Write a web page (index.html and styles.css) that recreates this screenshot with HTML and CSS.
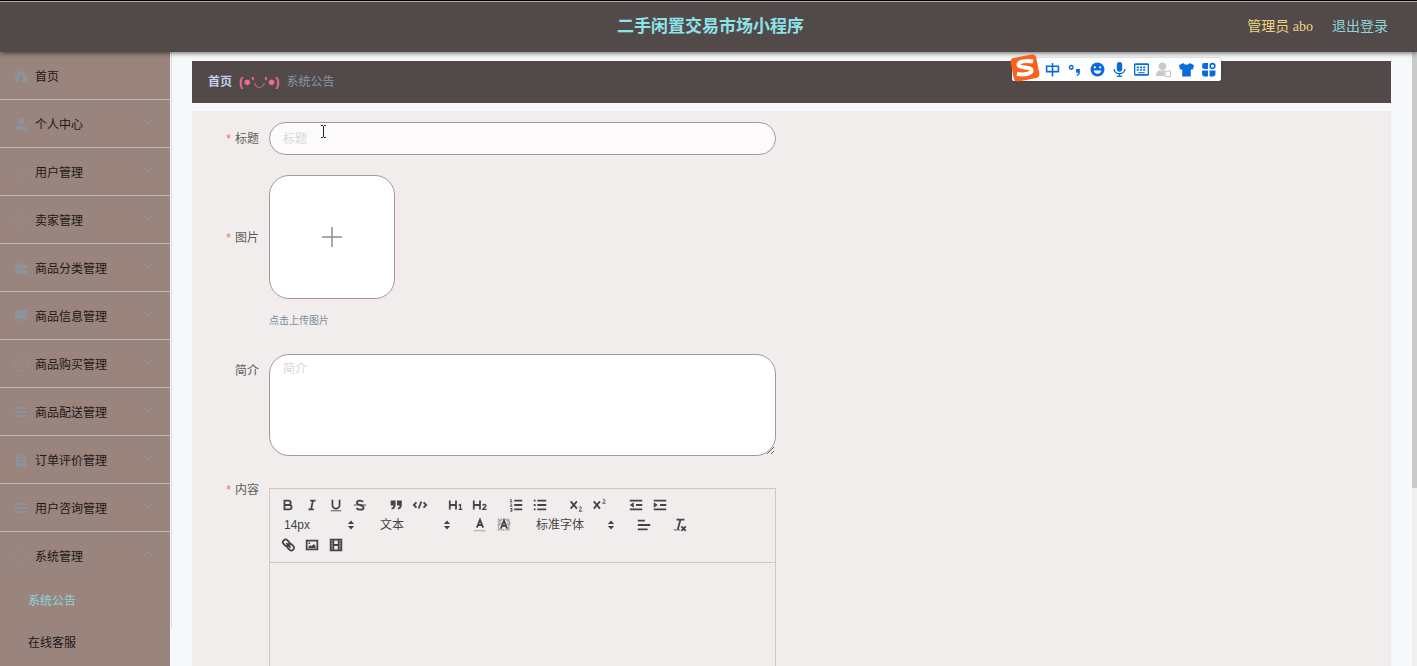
FILE: index.html
```html
<!DOCTYPE html>
<html lang="zh-Hans">
<head>
  <meta charset="UTF-8">
  <meta name="viewport" content="width=device-width, initial-scale=1">
  <title>二手闲置交易市场小程序</title>
  <link rel="stylesheet" href="styles.css">
</head>
<body>

  <header class="header">
    <h1>二手闲置交易市场小程序</h1>
    <div class="user">
      <span class="user-name">管理员 abo</span>
      <a href="#" class="logout">退出登录</a>
    </div>
  </header>

  <div class="layout">
    <!-- 侧边菜单 -->
    <nav class="sidebar">
      <a href="#" class="menu-item home">
        <svg class="icon" viewBox="0 0 14 14"><path d="M7 1L1 6v7h4V9a2 2 0 0 1 4 0v4h4V6z"/></svg>首页
      </a>
      <button type="button" class="menu-item">
        <svg class="icon" viewBox="0 0 14 14"><circle cx="7" cy="4" r="3.2"/><path d="M1 13c0-3 1.500-4.500 4-4.500h4c2.500 0 4 1.500 4 4.500z"/></svg>个人中心
        <svg class="arrow" viewBox="0 0 10 6"><path d="M1 1l4 4 4-4"/></svg>
      </button>
      <button type="button" class="menu-item">
        <svg class="icon line" viewBox="0 0 14 14"><path d="M7 1v6M4 2.500a5.500 5.500 0 1 0 6 0"/></svg>用户管理
        <svg class="arrow" viewBox="0 0 10 6"><path d="M1 1l4 4 4-4"/></svg>
      </button>
      <button type="button" class="menu-item">
        <svg class="icon line" viewBox="0 0 14 14"><circle cx="7" cy="7" r="6"/><path d="M7 1v4M7 9v4M1 7h4M9 7h4"/></svg>卖家管理
        <svg class="arrow" viewBox="0 0 10 6"><path d="M1 1l4 4 4-4"/></svg>
      </button>
      <button type="button" class="menu-item">
        <svg class="icon" viewBox="0 0 14 14"><path d="M4 4V1h6v3h3v4H1V4zM5 4h4V2H5zM1 9h12v4H1z" fill-rule="evenodd"/></svg>商品分类管理
        <svg class="arrow" viewBox="0 0 10 6"><path d="M1 1l4 4 4-4"/></svg>
      </button>
      <button type="button" class="menu-item">
        <svg class="icon" viewBox="0 0 14 14"><path d="M1 1h12v9H1zM6 10h2v2h2v1H4v-1h2z"/></svg>商品信息管理
        <svg class="arrow" viewBox="0 0 10 6"><path d="M1 1l4 4 4-4"/></svg>
      </button>
      <button type="button" class="menu-item">
        <svg class="icon line" viewBox="0 0 14 14"><rect x="3.500" y=".5" width="10" height="10" rx="1"/><path d="M3 3.500H.5v10h10V11"/></svg>商品购买管理
        <svg class="arrow" viewBox="0 0 10 6"><path d="M1 1l4 4 4-4"/></svg>
      </button>
      <button type="button" class="menu-item">
        <svg class="icon" viewBox="0 0 14 14"><path d="M1 2h12v2H1zM5 6h8v2H5zM1 10h12v2H1zM1 7l3-2v4z"/></svg>商品配送管理
        <svg class="arrow" viewBox="0 0 10 6"><path d="M1 1l4 4 4-4"/></svg>
      </button>
      <button type="button" class="menu-item">
        <svg class="icon" viewBox="0 0 14 14"><path d="M2 2h2v2h6V2h2v12H2zM5 1h4v2H5zM4 6v1h6V6zM4 9v1h6V9z" fill-rule="evenodd"/></svg>订单评价管理
        <svg class="arrow" viewBox="0 0 10 6"><path d="M1 1l4 4 4-4"/></svg>
      </button>
      <button type="button" class="menu-item">
        <svg class="icon" viewBox="0 0 14 14"><path d="M1 2h12v2H1zM1 6h8v2H1zM1 10h12v2H1zM13 5v4l-3-2z"/></svg>用户咨询管理
        <svg class="arrow" viewBox="0 0 10 6"><path d="M1 1l4 4 4-4"/></svg>
      </button>
      <button type="button" class="menu-item open">
        <svg class="icon line" viewBox="0 0 14 14"><path d="M1.500 5V1.500H5M9 1.500h3.500V5M12.500 9v3.500H9M5 12.500H1.500V9"/></svg>系统管理
        <svg class="arrow" viewBox="0 0 10 6"><path d="M1 5l4-4 4 4"/></svg>
      </button>
      <a href="#" class="sub-item active">系统公告</a>
      <a href="#" class="sub-item">在线客服</a>
    </nav>
    <div class="divider"></div>

    <main class="main">
      <div class="breadcrumb">
        <a href="#">首页</a>
        <span class="face">(●'◡'●)</span>
        <span class="current">系统公告</span>
      </div>

      <form class="panel">
        <div class="row">
          <label class="required" for="title">标题</label>
          <input type="text" id="title" class="field" placeholder="标题">
        </div>

        <div class="row row-upload">
          <label class="required" for="upload">图片</label>
          <div>
            <button type="button" class="upload" id="upload" aria-label="上传图片">
              <svg viewBox="0 0 20 20"><path d="M10 0v20M0 10h20"/></svg>
            </button>
            <p class="tip">点击上传图片</p>
          </div>
        </div>

        <div class="row row-intro">
          <label for="intro">简介</label>
          <textarea id="intro" class="field" placeholder="简介"></textarea>
        </div>

        <div class="row row-content">
          <label class="required" for="content">内容</label>
          <div class="editor">
            <div class="toolbar">
              <span class="group">
                <button type="button" aria-label="加粗"><svg viewBox="0 0 18 18"><path d="M5 4h4.500a2.500 2.500 0 0 1 0 5H5zM5 9h5.500a2.500 2.500 0 0 1 0 5H5z"/></svg></button>
                <button type="button" aria-label="斜体"><svg viewBox="0 0 18 18"><path d="M7 4h6M5 14h6M8 14l2-10"/></svg></button>
                <button type="button" aria-label="下划线"><svg viewBox="0 0 18 18"><path d="M5 3v6a4 4 0 0 0 8 0V3"/><path class="thin" d="M3 15.500h12"/></svg></button>
                <button type="button" aria-label="删除线"><svg viewBox="0 0 18 18"><path class="thin" d="M2 9h14"/><path d="M12.500 5.500C11 3.500 5.500 3.500 5.500 6.500c0 1.500 1 2 3.500 2.500M9 9c3 .5 4 1.500 4 3 0 3-6 3-8 .5"/></svg></button>
              </span>
              <span class="group">
                <button type="button" aria-label="引用"><svg viewBox="0 0 18 18"><path class="fill" d="M3 4h5.500v5c0 3-1.500 5-4.500 5v-2c1.500 0 2-1 2-2.500H3zM10 4h5.500v5c0 3-1.500 5-4.500 5v-2c1.500 0 2-1 2-2.500h-3z"/></svg></button>
                <button type="button" aria-label="代码"><svg viewBox="0 0 18 18"><path d="M5 6L2 9l3 3M13 6l3 3-3 3M10.500 5l-3 8"/></svg></button>
              </span>
              <span class="group">
                <button type="button" aria-label="标题一"><svg viewBox="0 0 18 18"><path d="M2 4v10M9 4v10M2 9h7"/><path class="mid" d="M12 9.500l2-1V14M12 14h4"/></svg></button>
                <button type="button" aria-label="标题二"><svg viewBox="0 0 18 18"><path d="M2 4v10M9 4v10M2 9h7"/><path class="mid" d="M12 9.500c.5-1.500 4-1.500 3.500.5 0 1-3 2.500-3.500 4h4.500"/></svg></button>
              </span>
              <span class="group">
                <button type="button" aria-label="有序列表"><svg viewBox="0 0 18 18"><path d="M7 4h9M7 9h9M7 14h9"/><path class="thin" d="M2.500 3l1-.5v3M2 5.500h3M2.500 8c1-1 2 0 1.500 1l-1.500 1.500H5M2.500 13h2v3h-2M3 14.500h1.500"/></svg></button>
                <button type="button" aria-label="无序列表"><svg viewBox="0 0 18 18"><path d="M6 4h10M6 9h10M6 14h10M2 4h2M2 9h2M2 14h2"/></svg></button>
              </span>
              <span class="group">
                <button type="button" aria-label="下标"><svg viewBox="0 0 18 18"><path d="M3 5l7 8M10 5l-7 8"/><path class="thin" d="M12.500 12c.5-1.500 3-1 2.500.5L12.500 16H16"/></svg></button>
                <button type="button" aria-label="上标"><svg viewBox="0 0 18 18"><path d="M2 5l7 8M9 5l-7 8"/><path class="thin" d="M12 3.500c.5-1.500 3-1 2.500.5L12 7h3.500"/></svg></button>
              </span>
              <span class="group">
                <button type="button" aria-label="减少缩进"><svg viewBox="0 0 18 18"><path d="M2 4h14M9 9h7M2 14h14"/><path class="fill" d="M6.500 6v6L2 9z"/></svg></button>
                <button type="button" aria-label="增加缩进"><svg viewBox="0 0 18 18"><path d="M2 4h14M9 9h7M2 14h14"/><path class="fill" d="M2 6v6l4.500-3z"/></svg></button>
              </span>
              <span class="group picker">
                <select aria-label="字号"><option>14px</option><option>16px</option><option>18px</option></select>
                <svg viewBox="0 0 18 18"><path class="fill" d="M5.500 8L9 4l3.500 4zM5.500 10L9 14l3.500-4z"/></svg>
              </span>
              <span class="group picker">
                <select aria-label="段落"><option>文本</option><option>标题1</option><option>标题2</option></select>
                <svg viewBox="0 0 18 18"><path class="fill" d="M5.500 8L9 4l3.500 4zM5.500 10L9 14l3.500-4z"/></svg>
              </span>
              <span class="group">
                <button type="button" aria-label="文字颜色"><svg viewBox="0 0 18 18"><path d="M5.500 12L9 3l3.500 9M6.500 9h5"/><path class="thin pale" d="M2 15.500h13"/></svg></button>
                <button type="button" aria-label="背景颜色"><svg viewBox="0 0 18 18"><path class="dots" d="M2 2.500h14M3 4h4M12 4h4M2 5.500h4M13 5.500h3M3 7h3M13 7h3M2 8.500h3M13 8.500h3M3 10h2M14 10h2M2 11.500h2M14 11.500h2M3 13h1M14 13h2M2 14.500h14"/><path d="M5.500 13L9 4l3.500 9M6.500 10h5"/></svg></button>
              </span>
              <span class="group picker picker-font">
                <select aria-label="字体"><option>标准字体</option><option>衬线字体</option><option>等宽字体</option></select>
                <svg viewBox="0 0 18 18"><path class="fill" d="M5.500 8L9 4l3.500 4zM5.500 10L9 14l3.500-4z"/></svg>
              </span>
              <span class="group">
                <button type="button" aria-label="对齐"><svg viewBox="0 0 18 18"><path d="M2 4h8M2 9h14M2 14h11"/></svg></button>
              </span>
              <span class="group">
                <button type="button" aria-label="清除格式"><svg viewBox="0 0 18 18"><path d="M5 3h9M6.500 14L9.500 3M10.500 10.500l5 5M15.500 10.500l-5 5"/><path class="thin" d="M2 14.500h7"/></svg></button>
              </span>
              <span class="group">
                <button type="button" aria-label="链接"><svg viewBox="0 0 18 18"><rect x="3" y="3.500" width="8" height="6" rx="3" transform="rotate(45 7 6.500)"/><rect x="8" y="8.500" width="8" height="6" rx="3" transform="rotate(45 12 11.500)"/><path d="M7 7l5 5"/></svg></button>
                <button type="button" aria-label="图片"><svg viewBox="0 0 18 18"><path d="M3 4h12v10H3z"/><path class="fill" d="M5 12.500V11l2-2 1.500 1.500L11 8l2 2v2.500z"/><circle class="fill" cx="6" cy="7" r="1"/></svg></button>
                <button type="button" aria-label="视频"><svg viewBox="0 0 18 18"><path d="M3 3h12v12H3zM6 3v12M12 3v12M6 9h6"/><path class="thin" d="M3 6h3M3 9h3M3 12h3M12 6h3M12 9h3M12 12h3"/></svg></button>
              </span>
            </div>
            <textarea id="content" class="editor-body"></textarea>
          </div>
        </div>
      </form>
    </main>

    <div class="scrollbar"><div class="thumb"></div></div>
  </div>

  <!-- 输入法状态栏 -->
  <div class="ime">
    <svg class="ime-logo" viewBox="0 0 30 30"><rect x="2" y="3" width="26" height="24" rx="4" fill="#f9611c" transform="rotate(-11 15 15)"/><path d="M23 8.500C16 7 8 8.500 8.500 12c.5 3.500 13 1.500 13 5.500 0 3.500-8 4.500-14.500 3.500" fill="none" stroke="#fff" stroke-width="4"/></svg>
    <svg viewBox="0 0 14 14"><path d="M1.500 4h11v5h-11zM7 1v12.500" fill="none" stroke="#0a6bdc" stroke-width="1.500"/></svg>
    <svg viewBox="0 0 14 14"><circle cx="4" cy="5" r="1.700" fill="none" stroke="#0a6bdc" stroke-width="1.300"/><path d="M8.500 6.500H12v3c0 2-1 3-3 3.500v-1c1-.5 1.500-1 1.500-2h-2z"/></svg>
    <svg viewBox="0 0 14 14"><circle cx="7" cy="7" r="6.500"/><path d="M3.500 8h7c-.5 4-6.500 4-7 0z" fill="#fff"/><circle cx="4.500" cy="5" r="1" fill="#fff"/><circle cx="9.500" cy="5" r="1" fill="#fff"/></svg>
    <svg viewBox="0 0 14 14"><rect x="4.500" y="0" width="5" height="9" rx="2.500"/><path d="M2 6.500c0 6 10 6 10 0M7 11v3M4.500 13.500h5" fill="none" stroke="#0a6bdc" stroke-width="1.300"/></svg>
    <svg viewBox="0 0 14 14"><rect x=".5" y="2" width="13" height="10" rx="1" fill="none" stroke="#0a6bdc" stroke-width="1.500"/><path d="M2.500 5h9M2.500 7.500h9" fill="none" stroke="#0a6bdc" stroke-width="1.500" stroke-dasharray="2 1"/><path d="M4 9.500h6v1H4z"/></svg>
    <svg viewBox="0 0 14 14"><g fill="#c9c9c9"><circle cx="6" cy="4" r="3.500"/><path d="M0 13c0-4 2-5 4-5h4v5z"/><rect x="8.500" y="8.500" width="5" height="5" fill="#fff" stroke="#c9c9c9"/></g></svg>
    <svg viewBox="0 0 14 14"><path d="M4 1c1 2 5 2 6 0l4 2-1 4h-2v6.500H3V7H1L0 3z"/></svg>
    <svg viewBox="0 0 14 14"><path d="M3 1h3.500v5.500H3a2 2 0 0 1-2-2V3a2 2 0 0 1 2-2zM1 8h5.500v5.500H3a2 2 0 0 1-2-2zM8 8h5.500v3.500a2 2 0 0 1-2 2H8z"/><circle cx="10.700" cy="3.700" r="2.200" fill="none" stroke="#0a6bdc" stroke-width="1.500"/></svg>
  </div>

  <svg class="cursor" viewBox="0 0 7 13"><path d="M1 .5h2M4 .5h2M3.500 1v11M1 12.500h2M4 12.500h2" fill="none" stroke="#222"/></svg>

</body>
</html>
```
FILE: styles.css
```css
* {
  box-sizing: border-box;
}

body {
  margin: 0;
  height: 100vh;
  display: flex;
  flex-direction: column;
  overflow: hidden;
  position: relative;
  background: #f6f8fa;
  font-family: "Liberation Sans", "Noto Sans CJK SC", sans-serif;
  font-size: 12px;
  color: #5f5b5b;
}

a {
  text-decoration: none;
}

button,
input,
select,
textarea {
  font: inherit;
  color: inherit;
}

/* 顶部 */
.header {
  flex: none;
  height: 52px;
  padding: 0 29px 0 33px;
  display: grid;
  grid-template-columns: 1fr auto 1fr;
  align-items: center;
  background: #514a48;
  border-top: 1px solid #000;
  box-shadow: inset 0 1px #b5adad, 0 1px 5px rgba(0, 0, 0, 0.6);
  position: relative;
  z-index: 1;
}

.header h1 {
  grid-column: 2;
  margin: 0;
  font-size: 17px;
  line-height: 24px;
  color: #8ee3ea;
}

.user {
  display: flex;
  justify-content: flex-end;
  gap: 19px;
  font-family: "Liberation Serif", "Noto Sans CJK SC", serif;
  font-size: 14px;
  line-height: 20px;
}

.user-name {
  color: #edd683;
}

.logout {
  color: #8ed5dc;
}

.layout {
  flex: 1;
  min-height: 0;
  display: flex;
}

/* 侧边菜单 */
.sidebar {
  flex: none;
  width: 170px;
  background: #9a847e;
  overflow: hidden;
}

.menu-item {
  width: 100%;
  height: 48px;
  padding: 0 17px 0 14px;
  display: flex;
  align-items: center;
  gap: 7px;
  background: none;
  border: 0;
  border-bottom: 1px solid #c3b5af;
  color: #1d1817;
  text-align: left;
}

.menu-item.open {
  border-bottom-color: transparent;
}

.icon {
  width: 14px;
  height: 14px;
  fill: #8c939b;
}

.icon.line {
  fill: none;
  stroke: #8c8f95;
}

.arrow {
  width: 10px;
  height: 6px;
  margin-left: auto;
  margin-bottom: 4px;
  fill: none;
  stroke: #a0948f;
}

.sub-item {
  display: block;
  padding-left: 28px;
  line-height: 42px;
  color: #1d1817;
}

.sub-item.active {
  color: #8ed5dc;
}

.divider {
  width: 2px;
  margin-bottom: 38px;
  border-right: 1px solid #dcdcde;
}

/* 主体 */
.main {
  flex: 1;
  min-width: 0;
  padding: 9px 21px 0 20px;
}

.breadcrumb {
  height: 42px;
  padding: 0 16px;
  display: flex;
  align-items: center;
  gap: 7px;
  line-height: 20px;
  background: #514a48;
}

.breadcrumb a {
  font-weight: bold;
  color: #c5d0ee;
}

.face {
  font-family: "Liberation Sans", "DejaVu Sans", sans-serif;
  font-size: 13px;
  font-weight: bold;
  color: #ec6a9c;
}

.current {
  color: #8b95aa;
}

.panel {
  margin-top: 8px;
  padding: 11px 10px;
  background: #f1edec;
}

.row {
  display: flex;
  gap: 10px;
  max-width: 574px;
  margin-bottom: 19px;
}

.row label {
  flex: none;
  width: 57px;
  line-height: 34px;
  text-align: right;
}

.required::before {
  content: "*";
  margin-right: 4px;
  color: #f56c6c;
}

.field {
  flex: 1;
  min-width: 0;
  padding: 0 13px;
  border: 1px solid #a79797;
  background: #fff;
  outline: none;
}

input.field {
  height: 33px;
  border-radius: 17px;
  background: #fcfafb;
}

.field::placeholder {
  color: #d8d8da;
}

.row-upload {
  margin-bottom: 23px;
}

.row-upload label {
  line-height: 126px;
}

.upload {
  width: 126px;
  height: 124px;
  padding: 0;
  display: flex;
  align-items: center;
  justify-content: center;
  border: 1px solid #a79797;
  border-radius: 20px;
  background: #fff;
}

.upload svg {
  width: 20px;
  height: 20px;
  fill: none;
  stroke: #8a8d92;
  stroke-width: 1.5;
}

.tip {
  margin: 12px 0 0;
  font-size: 10px;
  line-height: 20px;
  color: #808aa0;
}

.row-intro {
  margin-bottom: 32px;
}

textarea.field {
  height: 102px;
  padding-top: 4px;
  border-radius: 20px;
  resize: vertical;
}

/* 富文本编辑器 */
.row-content label {
  line-height: 4px;
}

.editor {
  flex: 1;
  min-width: 0;
  border: 1px solid #ccc8c8;
}

.toolbar {
  display: flex;
  flex-wrap: wrap;
  padding: 6px 6px 7px;
  border-bottom: 1px solid #ccc8c8;
  color: #444;
}

.group {
  display: flex;
  height: 20px;
  margin-right: 12px;
}

.toolbar button {
  width: 24px;
  padding: 2px 4px;
  border: 0;
  background: none;
}

.toolbar svg {
  display: block;
  width: 16px;
  height: 16px;
  fill: none;
  stroke: #444;
  stroke-width: 2;
}

.toolbar .fill {
  fill: #444;
  stroke: none;
}

.toolbar .thin {
  stroke-width: 1;
}

.toolbar .mid {
  stroke-width: 1.5;
}

.toolbar .pale {
  stroke: #999;
}

.toolbar .dots {
  stroke-width: 1;
  stroke-dasharray: 1 1;
}

.picker {
  position: relative;
  width: 84px;
}

.picker-font {
  width: 92px;
}

.picker select {
  width: 100%;
  padding: 0 8px;
  border: 0;
  background: none;
  appearance: none;
}

.picker svg {
  position: absolute;
  top: 2px;
  right: 1px;
  pointer-events: none;
}

.editor-body {
  display: block;
  width: 100%;
  height: 300px;
  border: 0;
  background: none;
  resize: none;
}

/* 滚动条 */
.scrollbar {
  flex: none;
  width: 5px;
  background: #f0f0f0;
}

.thumb {
  height: 71%;
  background: #cacaca;
}

/* 输入法状态栏 */
.ime {
  position: absolute;
  top: 58px;
  right: 196px;
  z-index: 2;
  width: 209px;
  height: 23px;
  padding: 0 5px 0 33px;
  display: flex;
  align-items: center;
  justify-content: space-between;
  background: #fff;
  border-radius: 2px;
  box-shadow: 0 0 2px rgba(0, 0, 0, 0.3);
}

.ime svg {
  width: 15px;
  height: 15px;
  fill: #0a6bdc;
}

.ime .ime-logo {
  position: absolute;
  top: -5px;
  left: -2px;
  width: 30px;
  height: 30px;
}

.cursor {
  position: absolute;
  top: 125px;
  left: 320px;
  width: 7px;
  height: 13px;
}
```
